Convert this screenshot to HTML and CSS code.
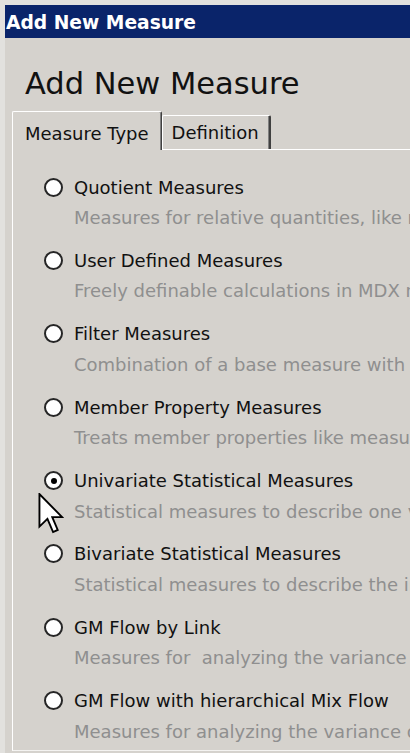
FILE: index.html
```html
<!DOCTYPE html>
<html>
<head>
    <title>Add New Measure</title>
    <link rel="stylesheet" href="styles.css">
</head>
<body>
    <div class="window">
        <div class="titlebar">Add New Measure</div>
        <div class="content">
            <h1 class="heading">Add New Measure</h1>

            <div class="tabs">
                <div class="tab tab-active">Measure Type</div>
                <div class="tab">Definition</div>
            </div>

            <div class="panel">
                <div class="option">
                    <div class="option-label"><span class="radio"></span>Quotient Measures</div>
                    <div class="option-desc">Measures for relative quantities, like ratios and shares</div>
                </div>
                <div class="option">
                    <div class="option-label"><span class="radio"></span>User Defined Measures</div>
                    <div class="option-desc">Freely definable calculations in MDX notation</div>
                </div>
                <div class="option">
                    <div class="option-label"><span class="radio"></span>Filter Measures</div>
                    <div class="option-desc">Combination of a base measure with a filter</div>
                </div>
                <div class="option">
                    <div class="option-label"><span class="radio"></span>Member Property Measures</div>
                    <div class="option-desc">Treats member properties like measures</div>
                </div>
                <div class="option">
                    <div class="option-label"><span class="radio radio-checked"></span>Univariate Statistical Measures</div>
                    <div class="option-desc">Statistical measures to describe one variable</div>
                </div>
                <div class="option">
                    <div class="option-label"><span class="radio"></span>Bivariate Statistical Measures</div>
                    <div class="option-desc">Statistical measures to describe the interrelation</div>
                </div>
                <div class="option">
                    <div class="option-label"><span class="radio"></span>GM Flow by Link</div>
                    <div class="option-desc">Measures for &nbsp;analyzing the variance of flows</div>
                </div>
                <div class="option">
                    <div class="option-label"><span class="radio"></span>GM Flow with hierarchical Mix Flow</div>
                    <div class="option-desc">Measures for analyzing the variance of mix flows</div>
                </div>
            </div>
        </div>
    </div>

    <!-- mouse pointer over the list -->
    <svg class="cursor" width="26" height="42" viewBox="0 0 12 20">
        <path d="M0.5 0.5 L0.5 16 L4.3 12.3 L7 18.6 L9.2 17.6 L6.6 11.5 L11.3 11.5 Z"
              fill="#fff" stroke="#000" stroke-width="0.9" stroke-linejoin="miter"/>
    </svg>
</body>
</html>
```

FILE: styles.css
```css
html, body {
    overflow: hidden;
}

body {
    margin: 0;
    height: 753px;
    background-color: #e2e1de;
    font-family: "DejaVu Sans", Verdana, sans-serif;
    position: relative;
}

.window {
    margin: 5px 0 0 5px;
    height: 748px;
    background-color: #d5d2cd;
    overflow: hidden;
}

.titlebar {
    height: 31px;
    padding: 2px 0 0 1px;
    line-height: 31px;
    background-color: #0a246a;
    color: #fff;
    font-size: 18.7px;
    font-weight: bold;
    white-space: nowrap;
}

.content {
    padding-left: 7px;
}

.heading {
    margin: 28px 0 0 13px;
    font-size: 30.5px;
    font-weight: normal;
    color: #111;
    line-height: normal;
    white-space: nowrap;
}

/* Tabs */
.tabs {
    display: flex;
    align-items: flex-end;
    margin-top: 10px;
    margin-bottom: -1px;
    position: relative;
}

.tab {
    font-size: 18px;
    line-height: 21px;
    color: #111;
    padding: 6px 10px 6px 9px;
    border-top: 1px solid #fff;
    border-left: 1px solid #fff;
    border-right: 2px solid #404040;
    box-shadow: inset -1px 0 0 #808080;
    border-radius: 2px 2px 0 0;
    margin-bottom: 1px;
    white-space: nowrap;
}

.tab-active {
    padding: 11px 12px 6px 12px;
    margin-bottom: 0;
    border-right-width: 1px;
    background-color: #d5d2cd;
    position: relative;
    z-index: 1;
}

/* Tab panel */
.panel {
    border-top: 1px solid #fff;
    border-left: 1px solid #fff;
    border-bottom: 1px solid #f4f3f1;
    padding: 22px 0 0 31px;
    height: 578px;
    display: flex;
    flex-direction: column;
    gap: 11.4px;
}

.option {
    white-space: nowrap;
}

.option-label {
    display: flex;
    align-items: center;
    gap: 11px;
    height: 30px;
    font-size: 18px;
    color: #111;
}

.option-desc {
    margin-left: 30px;
    height: 32px;
    line-height: 32px;
    font-size: 18px;
    color: #8f8f8f;
}

.radio {
    width: 15px;
    height: 15px;
    flex-shrink: 0;
    border: 2px solid #262626;
    border-radius: 50%;
    background-color: #fff;
    position: relative;
}

.radio-checked::after {
    content: "";
    position: absolute;
    left: 4.5px;
    top: 4.5px;
    width: 6px;
    height: 6px;
    border-radius: 50%;
    background-color: #000;
}

.cursor {
    position: absolute;
    left: 38px;
    top: 493px;
}
```
